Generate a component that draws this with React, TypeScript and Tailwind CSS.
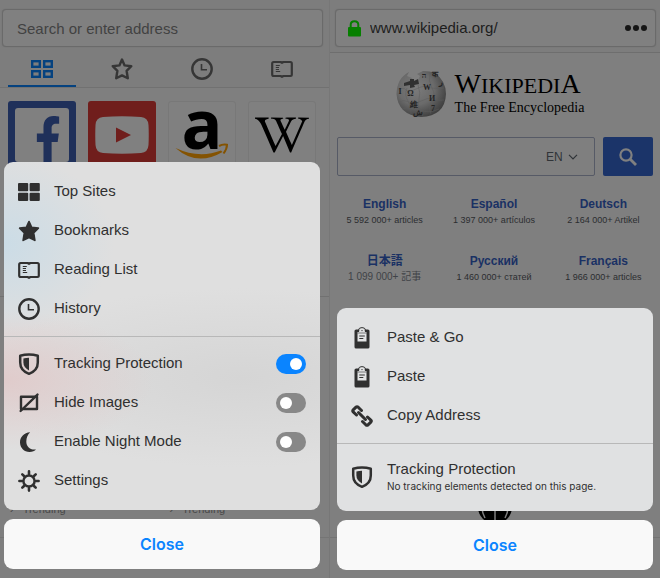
import { useState } from "react";
import type { ReactNode } from "react";
import { FaFacebookF, FaWikipediaW } from "react-icons/fa";

const svgProps = { viewBox: "0 0 22 22", className: "h-[22px] w-[22px] shrink-0", "aria-hidden": true } as const;

function TopSitesIcon() {
  return (
    <svg {...svgProps} fill="currentColor">
      <rect x="0" y="2" width="10.2" height="8.3" rx="1" />
      <rect x="11.6" y="2" width="10.2" height="8.3" rx="1" />
      <rect x="0" y="11.8" width="10.2" height="8.3" rx="1" />
      <rect x="11.6" y="11.8" width="10.2" height="8.3" rx="1" />
    </svg>
  );
}

function GridOutlineIcon() {
  return (
    <svg {...svgProps} fill="none" stroke="currentColor" strokeWidth="2.4">
      <rect x="1.2" y="3.2" width="7.6" height="5.6" />
      <rect x="13.2" y="3.2" width="7.6" height="5.6" />
      <rect x="1.2" y="13.2" width="7.6" height="5.6" />
      <rect x="13.2" y="13.2" width="7.6" height="5.6" />
    </svg>
  );
}

function StarIcon({ outline = false }: { outline?: boolean }) {
  return (
    <svg {...svgProps} fill={outline ? "none" : "currentColor"} stroke="currentColor" strokeWidth={outline ? 2.4 : 1.8} strokeLinejoin="round">
      <path d="M11 1.6 L13.6 7.4 L20.3 8.2 L15.6 12.8 L16.8 20.3 L11 17.4 L5.2 20.3 L6.4 12.8 L1.7 8.2 L8.4 7.4 Z" />
    </svg>
  );
}

function ReadingIcon() {
  return (
    <svg {...svgProps} fill="none" stroke="currentColor" strokeWidth="2.2" strokeLinejoin="round">
      <path d="M2.6 4 H9.6 L11 4.8 L12.4 4 H19.4 Q20.8 4 20.8 5.4 V16.6 Q20.8 18 19.4 18 H12.4 L11 18.8 L9.6 18 H2.6 Q1.2 18 1.2 16.6 V5.4 Q1.2 4 2.6 4 Z" />
      <path d="M4.8 7.5 H8.8 M4.8 9.5 H8 M4.8 11.5 H8 M4.8 13.5 H9.2" strokeWidth="1" />
    </svg>
  );
}

function ClockIcon() {
  return (
    <svg {...svgProps} fill="none" stroke="currentColor">
      <circle cx="11" cy="11" r="9.7" strokeWidth="2.4" />
      <path d="M10.5 6 V11.8 H16" strokeWidth="1.6" />
    </svg>
  );
}

function ShieldIcon() {
  return (
    <svg {...svgProps}>
      <path d="M11 1.5 Q15.5 1.5 19.8 2.8 V9.5 Q19.8 17.5 11 20.8 Q2.2 17.5 2.2 9.5 V2.8 Q6.5 1.5 11 1.5 Z" fill="none" stroke="currentColor" strokeWidth="2.5" strokeLinejoin="round" />
      <path d="M11 4.8 V17.5 Q5.4 14.3 5.4 9.5 V5.6 Q8 4.8 11 4.8 Z" fill="currentColor" />
    </svg>
  );
}

function HideImagesIcon() {
  return (
    <svg {...svgProps} fill="none" stroke="currentColor" strokeWidth="2.4" strokeLinecap="round" strokeLinejoin="round">
      <rect x="3" y="4.8" width="16" height="12.2" />
      <path d="M2.6 19 L19.5 2.6" />
    </svg>
  );
}

function MoonIcon() {
  return (
    <svg {...svgProps} fill="currentColor">
      <path d="M12.2 1.2 C6 1.5 2 6 2 11.2 C2 16.8 6.2 21 11.5 21 C14.5 21 16.7 20 18 18.5 C12 19.3 8.3 15.5 8.3 10.5 C8.3 6.5 9.8 3.2 12.2 1.2 Z" />
    </svg>
  );
}

function GearIcon() {
  return (
    <svg {...svgProps} fill="none" stroke="currentColor" strokeLinecap="round">
      <circle cx="11" cy="11" r="5.6" strokeWidth="2.5" />
      <path d="M11 1.4 V4 M11 18 V20.6 M1.4 11 H4 M18 11 H20.6 M4.3 4.3 L6 6 M16 16 L17.7 17.7 M4.3 17.7 L6 16 M16 6 L17.7 4.3" strokeWidth="2.6" />
    </svg>
  );
}

function ClipboardIcon() {
  return (
    <svg {...svgProps}>
      <rect x="3.5" y="2.5" width="15" height="19" rx="1.6" fill="currentColor" />
      <path d="M6.5 5 H8 Q8.3 0.9 11 0.9 Q13.7 0.9 14 5 H15.5 V14.5 H6.5 Z" fill="#e2e3e4" />
      <path d="M7.2 2.6 Q8.6 0.6 11 0.6 Q13.4 0.6 14.8 2.6" fill="none" stroke="currentColor" strokeWidth="1" />
      <circle cx="11" cy="3.6" r="0.7" fill="currentColor" />
      <path d="M6.5 6 H15.5" stroke="currentColor" strokeWidth="0.6" />
      <path d="M8.3 9 H13.8 M8.3 11.5 H12.3" stroke="currentColor" strokeWidth="1" />
    </svg>
  );
}

function LinkIcon() {
  return (
    <svg {...svgProps} fill="none" stroke="currentColor" strokeWidth="3" strokeLinejoin="round" strokeLinecap="round">
      <path d="M5.5 10 L2.2 6.9 Q1.2 5.9 2.2 4.9 L5 2.2 Q6 1.2 7.2 2.2 L10.5 5.5" />
      <path d="M16.5 12 L19.8 15.1 Q20.8 16.1 19.8 17.1 L17 19.8 Q16 20.8 14.8 19.8 L11.5 16.5" />
      <path d="M7.5 7.5 L14.5 14.5" />
    </svg>
  );
}

function Globe() {
  return (
    <svg viewBox="0 0 50 48" className="h-12 w-[50px] shrink-0" role="img" aria-label="Wikipedia globe">
      <defs>
        <radialGradient id="globe" cx="40%" cy="38%" r="65%">
          <stop offset="0" stopColor="#7b7b7b" />
          <stop offset="0.55" stopColor="#6a6a6a" />
          <stop offset="1" stopColor="#404040" />
        </radialGradient>
      </defs>
      <path d="M13 2 L11 6 L16 8 L17 11 L22 10 L24 6 L21 4 L27 1 Q34 1 39 3 Q50 11 50 24 Q49 46 25 47 Q2 45 0.5 24 Q1 8 13 2 Z" fill="url(#globe)" />
      <path d="M8 13 L14 11 L14 9 L18 9 L18 11 L22 9 L23 14 L18 15 L19 17 L14 18 L14 15 L8 16 Z" fill="#303030" />
      <g fill="none" stroke="#5c5c5c" strokeWidth="0.5">
        <path d="M2 20 Q8 17 10 20 T20 19 T32 17 T48 18 M2 32 Q8 29 13 32 T25 31 T37 29 T48 30 M6 39 Q18 36 25 40 T43 39" />
        <path d="M11 18 Q8 25 12 31 T15 44 M22 15 Q25 23 23 30 T27 46 M34 2 Q32 11 36 18 T36 31 T35 44" />
      </g>
      <g fill="#242424" className="font-['Liberation_Serif',serif] text-[8px] font-bold" textAnchor="middle">
        <text x="14.5" y="26">Ω</text>
        <text x="31" y="20">W</text>
        <text x="36" y="31">И</text>
        <text x="18" y="37">維</text>
        <text x="4" y="24">I</text>
        <text x="28" y="8">ה</text>
        <text x="45" y="15">ر</text>
        <text x="37" y="41">7</text>
        <text x="22" y="45">ش</text>
        <text x="39" y="7">क</text>
      </g>
    </svg>
  );
}

function Row({ icon, label }: { icon: ReactNode; label: string }) {
  return (
    <li>
      <button type="button" className="flex h-[39px] w-full items-center gap-[14px] px-[14px] text-left">
        {icon}
        <span>{label}</span>
      </button>
    </li>
  );
}

function ToggleRow({ icon, label, initial = false }: { icon: ReactNode; label: string; initial?: boolean }) {
  const [on, setOn] = useState(initial);
  return (
    <li>
      <label className="flex h-[39px] items-center gap-[14px] px-[14px]">
        {icon}
        <span className="flex-1">{label}</span>
        <input
          type="checkbox"
          checked={on}
          onChange={() => setOn(!on)}
          className="flex h-5 w-[30px] appearance-none items-center rounded-full bg-[#888] px-1 before:h-3 before:w-3 before:rounded-full before:bg-white checked:justify-end checked:bg-[#0a84ff]"
        />
      </label>
    </li>
  );
}

function CloseButton() {
  return (
    <button type="button" className="mt-[9px] h-[50px] w-full rounded-[9px] bg-[#f9f9f9] font-['Inter',sans-serif] text-[16px] font-semibold text-[#0a84ff]">
      Close
    </button>
  );
}

const tabs = [
  { label: "Top sites", icon: <GridOutlineIcon />, active: true },
  { label: "Bookmarks", icon: <StarIcon outline />, active: false },
  { label: "History", icon: <ClockIcon />, active: false },
  { label: "Reading list", icon: <ReadingIcon />, active: false },
];

function HomePanel() {
  return (
    <section className="relative flex min-h-screen flex-col overflow-hidden border-r border-[#777] bg-[#7d7d7d]">
      <div className="pt-[9px] pr-[6px] pl-[2px]">
        <input
          type="text"
          aria-label="Search or enter address"
          placeholder="Search or enter address"
          className="h-[38px] w-full rounded-[4px] border border-[#6a6a6a] bg-[#808080] px-[14px] text-[15px] shadow-[0_0_1px_#666] placeholder:text-[#424242]"
        />
      </div>
      <nav className="grid h-[41px] grid-cols-4 gap-3 border-b border-[#717171] pr-[13px] pl-2">
        {tabs.map((tab) => (
          <button
            key={tab.label}
            type="button"
            aria-label={tab.label}
            className={tab.active ? "flex items-center justify-center border-b-2 border-[#05427f] pt-[5px] text-[#05427f]" : "flex items-center justify-center pt-1 text-[#363636]"}
          >
            {tab.icon}
          </button>
        ))}
      </nav>
      <div className="grid h-[209px] grid-cols-4 items-start gap-3 border-b border-[#717171] bg-[#7f7f7f] pt-[13px] pr-[13px] pl-2">
        <a href="#facebook" aria-label="Facebook" className="flex h-[68px] justify-end rounded-[3px] bg-[#1f305a] p-[7px]">
          <span className="flex w-full items-end justify-end overflow-hidden rounded-[3px] bg-[#808080] pr-2 text-[#1f305a]">
            <FaFacebookF className="h-[46px] w-[26px] shrink-0" preserveAspectRatio="none" />
          </span>
        </a>
        <a href="#youtube" aria-label="YouTube" className="flex h-[68px] items-center justify-center rounded-[3px] bg-[#701e1c]">
          <svg viewBox="0 0 54 38" className="h-[38px] w-[54px]" aria-hidden>
            <path d="M8 1 Q27 -0.5 46 1 Q53 1.5 53.5 9 Q54 19 53.5 29 Q53 36.5 46 37 Q27 38.5 8 37 Q1 36.5 0.5 29 Q0 19 0.5 9 Q1 1.5 8 1 Z" fill="#808080" />
            <path d="M21 11.5 L36 19 L21 26.5 Z" fill="#701e1c" />
          </svg>
        </a>
        <a href="#amazon" aria-label="Amazon" className="flex h-[68px] flex-col items-center rounded-[3px] border border-[#787878] bg-[#808080] text-black">
          <span className="h-[41px] font-['Open_Sans',sans-serif] text-[68px] leading-[42px] font-bold">a</span>
          <svg viewBox="0 0 54 16" className="h-4 w-[54px] shrink-0" fill="none" aria-hidden>
            <path d="M0.5 5 Q24 16 46 7.5 L47.5 9 Q22 24 0.5 5 Z" fill="#845302" />
            <path d="M44 3 Q48 0.8 52 1.8 Q52 6 48.5 10.5" stroke="#845302" strokeWidth="2" />
          </svg>
        </a>
        <a href="#wikipedia" aria-label="Wikipedia" className="flex h-[68px] items-center justify-center rounded-[3px] border border-[#787878] bg-[#808080] text-black">
          <FaWikipediaW className="h-[54px] w-[54px]" />
        </a>
      </div>
      <div className="flex flex-1 flex-col justify-end bg-[#7f7f7f] pb-10" aria-hidden>
        <div className="grid grid-cols-2 border-b border-[#757575] pb-5 pl-[10px] text-[11px] leading-[16px] text-[#484848]">
          <span>›&nbsp;&nbsp; Trending</span>
          <span>›&nbsp;&nbsp; Trending</span>
        </div>
      </div>

      <div className="absolute right-[9px] bottom-[9px] left-1 text-[15px] text-[#303030]">
        <div className="overflow-hidden rounded-[9px] bg-[#dfdfdf] bg-[radial-gradient(ellipse_110px_90px_at_0px_82px,#cbdce6,transparent),radial-gradient(ellipse_150px_70px_at_0px_218px,#e0cbcb,transparent),radial-gradient(ellipse_260px_90px_at_75%_62%,#d5d5d5,transparent)]">
          <ul className="pt-[10px] pb-2">
            <Row icon={<TopSitesIcon />} label="Top Sites" />
            <Row icon={<StarIcon />} label="Bookmarks" />
            <Row icon={<ReadingIcon />} label="Reading List" />
            <Row icon={<ClockIcon />} label="History" />
          </ul>
          <ul className="border-t border-[#b8b8b8] pt-[7px] pb-[10px]">
            <ToggleRow icon={<ShieldIcon />} label="Tracking Protection" initial />
            <ToggleRow icon={<HideImagesIcon />} label="Hide Images" />
            <ToggleRow icon={<MoonIcon />} label="Enable Night Mode" />
            <Row icon={<GearIcon />} label="Settings" />
          </ul>
        </div>
        <CloseButton />
      </div>
    </section>
  );
}

const languages = [
  { name: "English", count: "5 592 000+ articles" },
  { name: "Español", count: "1 397 000+ artículos" },
  { name: "Deutsch", count: "2 164 000+ Artikel" },
  { name: "日本語", count: "1 099 000+ 記事", light: true },
  { name: "Русский", count: "1 460 000+ статей" },
  { name: "Français", count: "1 966 000+ articles" },
];

function WikipediaPanel() {
  return (
    <section className="relative flex min-h-screen flex-col overflow-hidden bg-[#7f7f7f]">
      <header className="border-b border-[#6e6e6e] bg-[#7d7d7d] pt-[9px] pr-1 pb-[5px] pl-[5px]">
        <div className="flex h-[38px] items-center rounded-[4px] border border-[#6a6a6a] bg-[#808080] pr-2 pl-3 shadow-[0_0_1px_#666]">
          <svg viewBox="0 0 13 17" className="mr-[9px] h-[17px] w-[13px] shrink-0" aria-hidden>
            <rect x="0" y="7" width="13" height="9.5" rx="1" fill="#067f00" />
            <path d="M2.7 8 V4.8 Q2.7 1.2 6.5 1.2 Q10.3 1.2 10.3 4.8 V8" fill="none" stroke="#067f00" strokeWidth="2" />
          </svg>
          <input type="text" aria-label="Address" defaultValue="www.wikipedia.org/" className="min-w-0 flex-1 bg-transparent text-[15px] text-[#1d1d1d]" />
          <button type="button" aria-label="Page options" className="flex gap-[2px]">
            <span className="h-[6px] w-[6px] rounded-full bg-[#151515]" />
            <span className="h-[6px] w-[6px] rounded-full bg-[#151515]" />
            <span className="h-[6px] w-[6px] rounded-full bg-[#151515]" />
          </button>
        </div>
      </header>
      <div className="mt-[17px] flex items-center justify-center gap-[9px] pr-[10px]">
        <Globe />
        <div className="font-['Liberation_Serif',serif] text-black">
          <h1 className="text-[22px] leading-[26px] whitespace-nowrap">
            <span className="text-[28px]">W</span>IKIPEDI<span className="text-[28px]">A</span>
          </h1>
          <p className="text-[14px] leading-[18px] whitespace-nowrap">The Free Encyclopedia</p>
        </div>
      </div>
      <form className="mt-[19px] flex gap-2 px-[7px]" onSubmit={(e) => e.preventDefault()}>
        <div className="flex h-[39px] min-w-0 flex-1 items-center rounded-[2px] border border-[#565a66] pr-4">
          <input type="search" aria-label="Search Wikipedia" className="h-full min-w-0 flex-1 bg-transparent" />
          <select aria-label="Language" className="w-[22px] appearance-none bg-transparent text-[12px] text-[#303438]">
            <option>EN</option>
          </select>
          <svg viewBox="0 0 10 6" className="h-[6px] w-[10px]" fill="none" stroke="#303438" strokeWidth="1.2" aria-hidden>
            <path d="M1 0.8 L5 4.8 L9 0.8" />
          </svg>
        </div>
        <button type="submit" aria-label="Search" className="flex h-[39px] w-[50px] items-center justify-center rounded-[2px] bg-[#1b3469]">
          <svg viewBox="0 0 18 18" className="h-[18px] w-[18px]" fill="none" stroke="#808080" aria-hidden>
            <circle cx="7" cy="7" r="5.6" strokeWidth="2.2" />
            <path d="M11 11 L17 17" strokeWidth="2.8" />
          </svg>
        </button>
      </form>
      <div className="mt-5 grid grid-cols-3 gap-y-[23px] pr-[2px] text-center">
        {languages.map((l) => (
          <a key={l.name} href={"#" + l.name} className="block">
            <strong className="block h-[18px] text-[12px] leading-[16px] text-[#1a3164]">{l.name}</strong>
            <small className={l.light ? "block h-4 text-[10px] leading-3 whitespace-nowrap text-[#404347]" : "block h-4 text-[9px] leading-3 whitespace-nowrap text-[#2b2d30]"}>{l.count}</small>
          </a>
        ))}
      </div>
      <div className="flex flex-1 flex-col items-center justify-end pb-10" aria-hidden>
        <div className="flex w-full justify-center border-b border-[#737373] pb-3">
          <svg viewBox="0 0 36 36" className="h-9 w-9">
            <circle cx="18" cy="18" r="17" fill="#000" />
            <path d="M18 2 V34 M4 18 H32 M8 8 Q2 18 8 29 M28 8 Q34 18 28 29" stroke="#7f7f7f" strokeWidth="1.5" fill="none" />
          </svg>
        </div>
      </div>

      <div className="absolute right-[7px] bottom-2 left-[7px] text-[15px] text-[#303030]">
        <div className="overflow-hidden rounded-[9px] bg-[#e0e1e2]">
          <ul className="pt-[10px] pb-2">
            <Row icon={<ClipboardIcon />} label="Paste & Go" />
            <Row icon={<ClipboardIcon />} label="Paste" />
            <Row icon={<LinkIcon />} label="Copy Address" />
          </ul>
          <button type="button" className="flex h-[68px] w-full items-center gap-[14px] border-t border-[#b8b8b8] px-[14px] pb-[2px] text-left">
            <ShieldIcon />
            <span>
              <span className="block leading-[18px]">Tracking Protection</span>
              <span className="block font-['Inter',sans-serif] text-[10px] leading-4">No tracking elements detected on this page.</span>
            </span>
          </button>
        </div>
        <CloseButton />
      </div>
    </section>
  );
}

export default function App() {
  return (
    <main className="grid min-h-screen grid-cols-2 font-['Liberation_Sans','Noto_Sans_CJK_JP',sans-serif]">
      <HomePanel />
      <WikipediaPanel />
    </main>
  );
}
